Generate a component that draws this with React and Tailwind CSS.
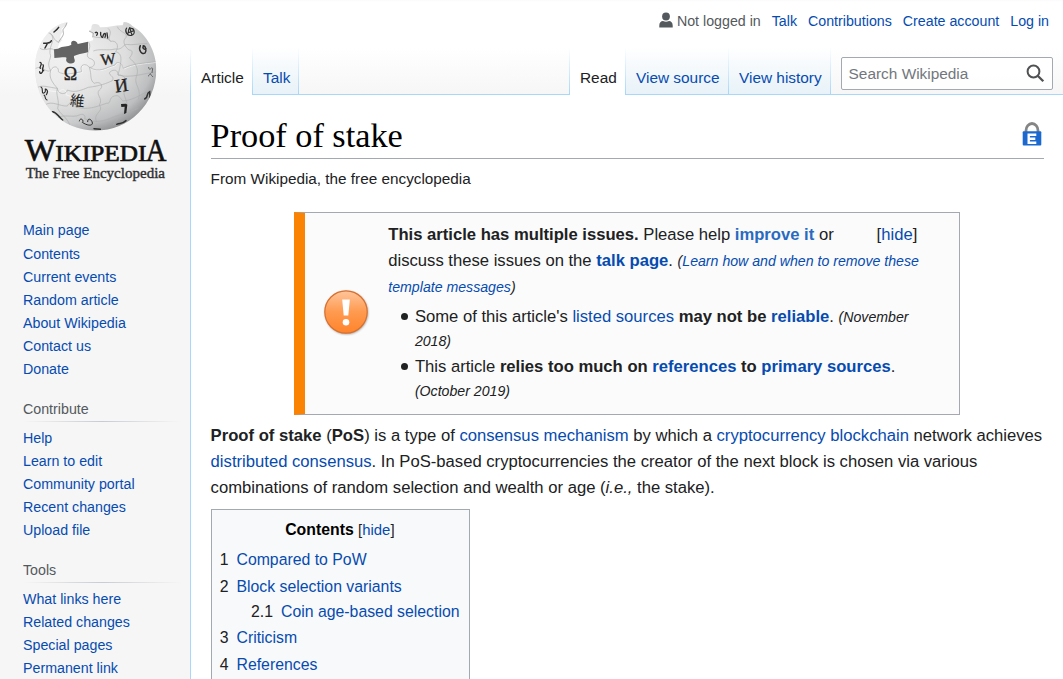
import React from "react";

const link = "text-[#064bb0]";

function A({ children, className = "" }) {
  return (
    <a href="#" className={`${link} ${className}`}>
      {children}
    </a>
  );
}

function Logo() {
  return (
    <svg width="150" height="166" viewBox="60 54 450 498" className="block" fontFamily="Liberation Serif, serif">
      <defs>
        <radialGradient id="globe" cx="0.36" cy="0.3" r="0.76">
          <stop offset="0" stopColor="#f0f0f0" />
          <stop offset="0.5" stopColor="#dedede" />
          <stop offset="0.8" stopColor="#bebfc0" />
          <stop offset="1" stopColor="#808183" />
        </radialGradient>
        <linearGradient id="leftlight" x1="0" x2="1" y1="0" y2="0">
          <stop offset="0" stopColor="#fff" stopOpacity="0.5" />
          <stop offset="0.5" stopColor="#fff" stopOpacity="0" />
        </linearGradient>
        <clipPath id="ball">
          <path d="M201 67 C180 70 160 82 145 98 C118 126 104 165 105 208 C107 310 184 392 287 392 C388 392 468 312 469 210 C469 155 441 103 397 78 C390 70 382 66 371 66 L368 76 C348 75 325 83 300 82 C298 73 289 71 279 73 C271 77 279 88 267 93 C272 100 283 98 279 121 L264 125 L263 158 C246 162 232 163 222 168 C220 174 230 184 220 189 C210 193 195 187 199 176 C202 170 190 172 163 174 L162 148 L174 146 C173 136 180 126 187 120 C174 112 184 102 188 96 C179 88 188 82 198 79 Z" />
        </clipPath>
      </defs>
      <g clipPath="url(#ball)">
        <rect x="100" y="60" width="375" height="340" fill="url(#globe)" />
        <rect x="100" y="60" width="375" height="340" fill="url(#leftlight)" />
        <g fill="none" stroke="#fff" strokeWidth="3" transform="translate(2 2)" opacity="0.6">
          <path d="M107 205 C130 195 135 220 152 212 C160 194 178 200 175 215 C200 228 226 220 245 215 C236 190 260 190 268 202 C300 220 315 203 345 195 C350 180 368 190 370 205 C400 190 430 190 468 185" />
          <path d="M118 275 C145 262 166 280 180 270 C186 262 200 270 196 282 C220 294 240 285 250 280" />
        </g>
        <g fill="none" stroke="#aeafb1" strokeWidth="2">
          <path d="M107 205 C130 195 135 220 152 212 C160 194 178 200 175 215 C192 228 218 220 245 215 C236 190 260 190 268 202 C300 220 315 203 345 195 C350 180 368 190 370 205 C400 190 430 190 468 185" />
          <path d="M113 262 C128 254 145 262 172 265 C174 285 200 285 202 270 C225 280 245 270 265 262 C300 258 320 250 337 242 C347 228 320 225 331 215 C340 208 355 208 354 225 C390 236 430 220 468 216" />
          <path d="M135 315 C155 300 180 320 202 318 C210 302 228 306 226 320 C260 332 290 320 319 310 C336 312 324 293 343 288 C360 282 362 300 369 303 C404 300 425 280 455 270" />
          <path d="M170 355 C190 340 218 355 238 345 C248 340 258 345 254 356 C285 372 316 362 338 352 C358 344 380 340 415 325" />
          <path d="M151 100 C170 120 147 135 150 160 C158 177 136 185 152 212 C145 235 160 250 172 265 C166 286 180 300 173 325 C180 343 200 350 210 376" />
          <path d="M265 125 C280 145 250 165 268 175 C292 180 285 204 268 202 C276 225 268 240 283 250 C300 242 314 258 298 270 C285 283 311 295 298 315 C314 335 276 340 290 366" />
          <path d="M324 85 C342 100 318 112 332 124 C350 120 359 138 347 155 C365 160 368 174 354 225 C377 222 387 250 373 270 C367 292 388 302 378 325 C370 350 350 355 340 375" />
          <path d="M352 80 C360 99 384 97 378 112 C365 125 375 140 387 150 C402 150 397 165 388 174 C405 187 419 206 409 230 C400 253 427 268 415 298" />
          <path d="M280 153 C300 145 322 153 345 147 C365 150 366 139 378 133 C397 137 418 130 442 131" />
          <path d="M145 98 C165 105 156 117 174 126 M120 145 C137 156 148 139 162 150 M279 110 C300 115 320 110 332 124" />
        </g>
        <g fill="#242424" textAnchor="middle">
          <text x="211" y="240" fontSize="54" stroke="#242424" strokeWidth="1">Ω</text>
          <text x="325" y="193" fontSize="48" stroke="#242424" strokeWidth="1" transform="rotate(-7 325 180)">W</text>
          <text x="364" y="275" fontSize="56" stroke="#242424" strokeWidth="1" transform="rotate(-8 364 257)">И</text>
          <text x="232" y="318" fontSize="44" fontFamily="Noto Sans CJK JP, sans-serif" transform="rotate(6 232 302)">維</text>
        </g>
        <path d="M363 312 L364 321 L374 320 L372 342 L379 339 L382 314 L378 311 Z" fill="#242424" />
        <g fill="none" stroke="#303030" strokeWidth="4.500" strokeLinecap="round">
          <path d="M286 98 C292 94 295 101 290 106 M302 97 C300 109 309 118 309 108 C313 95 319 99 315 112 M321 99 L323 114" strokeWidth="4" />
          <path d="M380 84 C373 93 381 109 394 106 C407 103 404 86 394 85 C386 81 384 93 386 99 M383 99 L402 92 M389 83 L396 105" strokeWidth="3.500" />
          <path d="M421 137 C414 150 426 166 435 159 C441 151 436 137 430 137 C426 146 434 150 438 146" />
          <path d="M176 82 C172 88 168 91 162 96" />
          <path d="M131 130 C140 130 152 128 154 122 M143 129 L135 144" />
          <path d="M120 187 C130 190 117 201 121 205 M129 194 C135 199 121 207 131 212 M119 215 C119 224 130 219 128 209" strokeWidth="4" />
          <path d="M123 261 C132 265 122 281 132 279 C142 274 131 264 139 268 C147 275 141 279 139 284 M132 285 C138 286 132 297 141 300" strokeWidth="3.500" />
          <path d="M157 335 C171 336 173 349 188 360" />
          <path d="M238 363 C240 350 254 361 247 367 C266 380 282 377 276 365 C273 356 262 354 263 365" strokeWidth="3" />
          <path d="M282 386 L301 388 M350 373 C362 368 363 375 378 362 M434 297 C448 289 436 282 449 275 L450 293" />
          <path d="M446 202 C448 218 455 197 458 206 L456 218 M445 228 C458 218 444 217 458 230" stroke="#626262" strokeWidth="3" />
        </g>
      </g>
      <path d="M162 148 L174 146 C190 136 202 141 214 134 C209 117 232 120 233 132 L264 125 L264 157 C246 162 232 163 222 168 C220 174 230 184 220 189 C210 193 195 187 199 176 C202 170 190 172 163 174 Z" fill="#646464" />
      <path d="M201 68 C194 90 186 83 190 97 C193 106 181 116 175 128 M267 93 L280 99 L278 112" fill="none" stroke="#8b8b8b" strokeWidth="2" />
      <g fill="#101010" stroke="#101010">
        <text x="74" y="482" fontSize="92" textLength="93" lengthAdjust="spacingAndGlyphs" strokeWidth="1.800">W</text>
        <text x="166" y="482" fontSize="70" textLength="273" lengthAdjust="spacingAndGlyphs" strokeWidth="2">IKIPEDI</text>
        <text x="437" y="482" fontSize="92" textLength="62" lengthAdjust="spacingAndGlyphs" strokeWidth="1.800">A</text>
      </g>
      <text x="77" y="533" fontSize="44" textLength="418" lengthAdjust="spacingAndGlyphs" fill="#303030" stroke="#303030" strokeWidth="1.200">The Free Encyclopedia</text>
    </svg>
  );
}

function Portal({ title, items }) {
  return (
    <nav className="mb-4">
      <h3 className="h-6 leading-6 text-[#54595d]">{title}</h3>
      <div className="mb-[5px] h-px bg-linear-to-r from-transparent via-[#c8ccd1] to-transparent" />
      <ul>
        {items.map((t) => (
          <li key={t} className="h-[23px] leading-[23px]"><A>{t}</A></li>
        ))}
      </ul>
    </nav>
  );
}

function Sidebar() {
  return (
    <aside className="h-[679px] w-[190px] shrink-0 overflow-hidden text-[14.24px]">
      <div className="pt-[18px] pl-5"><Logo /></div>
      <div className="mt-[34px] pr-[9px] pl-[23px]">
        <ul className="mb-4">
          <li className="h-[25px] leading-6"><A>Main page</A></li>
          {["Contents", "Current events", "Random article", "About Wikipedia", "Contact us", "Donate"].map((t) => (
            <li key={t} className="h-[23px] leading-[23px]"><A>{t}</A></li>
          ))}
        </ul>
        <Portal title="Contribute" items={["Help", "Learn to edit", "Community portal", "Recent changes", "Upload file"]} />
        <Portal title="Tools" items={["What links here", "Related changes", "Special pages", "Permanent link"]} />
      </div>
    </aside>
  );
}

function Line() {
  return <div className="w-px shrink-0 bg-linear-to-b from-white to-[#a7d7f9]" />;
}

function Tab({ children, active, className }) {
  return active ? (
    <div className={`-mb-px bg-white pt-[19px] pl-2.5 leading-6 text-[#202122] ${className}`}>{children}</div>
  ) : (
    <div className={`bg-linear-to-b from-white to-[#e8f2f8] pt-[19px] pl-2.5 leading-6 ${className}`}><A>{children}</A></div>
  );
}

function Header() {
  return (
    <header className="flex h-[95px] flex-col">
      <div className="flex h-[47px] justify-end pt-[9px] pr-[14px] text-[14.22px] leading-6">
        <svg width="14" height="16" viewBox="0 0 14 16" className="mt-[3px] mr-[4px]" fill="#54595d">
          <circle cx="7" cy="4.500" r="3.900" />
          <path d="M.3 15.500v-2C.3 10.500 2 9 4 9c2 1 4 1 6 0 2 0 3.700 1.500 3.700 4.500v2z" />
        </svg>
        <span className="mr-[11px] text-[#54595d]">Not logged in</span>
        <div className="flex gap-[11px]">
          <A>Talk</A><A>Contributions</A><A>Create account</A><A>Log in</A>
        </div>
      </div>
      <div className="flex h-12 border-b border-[#a7d7f9] text-[15.4px] whitespace-nowrap">
        <Line />
        <Tab active className="w-[61px]">Article</Tab>
        <Line />
        <Tab className="w-[45px]">Talk</Tab>
        <Line />
        <div className="flex-1" />
        <Line />
        <Tab active className="w-[55px]">Read</Tab>
        <Line />
        <Tab className="w-[102px]">View source</Tab>
        <Line />
        <Tab className="w-[101px]">View history</Tab>
        <Line />
        <div className="mt-[10px] mr-[10px] ml-[10px] flex h-[33px] w-[212px] items-center justify-between rounded-[2px] border border-[#a2a9b1] bg-white/90 pr-[7px] pl-[6.6px] text-[#72777d]">
          <span>Search Wikipedia</span>
          <svg width="19" height="19" viewBox="0 0 19 19" fill="none" stroke="#505153" strokeWidth="2">
            <circle cx="7.500" cy="7.500" r="5.900" />
            <path d="M11.700 11.700L17.300 17.300" strokeWidth="2.300" />
          </svg>
        </div>
      </div>
    </header>
  );
}

function Warning() {
  return (
    <svg width="48" height="48" viewBox="0 0 48 48" className="mb-[3px]">
      <defs>
        <linearGradient id="warn" x1="0" y1="0" x2="0" y2="1">
          <stop offset="0" stopColor="#ffc59b" />
          <stop offset="0.5" stopColor="#ff9a4f" />
          <stop offset="1" stopColor="#ff842b" />
        </linearGradient>
        <filter id="shade" x="-20%" y="-20%" width="140%" height="140%">
          <feGaussianBlur stdDeviation="0.8" />
        </filter>
      </defs>
      <circle cx="24.600" cy="24.800" r="21.500" fill="#777" opacity="0.7" filter="url(#shade)" />
      <circle cx="24" cy="24" r="21.200" fill="url(#warn)" stroke="#d96f2d" strokeWidth="1.200" />
      <path d="M20.200 11.400h7.600l-1.500 16h-4.600z" fill="#fff" />
      <circle cx="24" cy="34.200" r="3.300" fill="#fff" />
    </svg>
  );
}

function Small({ children }) {
  return <i className="text-[14.15px]">{children}</i>;
}

function Issue({ children }) {
  return (
    <li className="flex h-[50px]">
      <span className="mt-2 mr-[6.6px] ml-[13px] size-[7px] shrink-0 rounded-full bg-[#202122]" />
      <div>{children}</div>
    </li>
  );
}

function Notice() {
  return (
    <section className="ml-[83px] flex h-[203px] w-[666px] border border-l-[11px] border-[#a2a9b1] border-l-[#fb8304] bg-[#fbfbfb] text-[16.64px] whitespace-nowrap">
      <div className="flex w-[83.3px] shrink-0 items-center pl-[17px]"><Warning /></div>
      <div className="w-[529px] pt-[9px]">
        <div className="leading-[26px]">
          <div className="flex justify-between">
            <div><b>This article has multiple issues.</b> Please help <A className="font-bold text-[#2a6bc0]!">improve it</A> or</div>
            <div>[<A>hide</A>]</div>
          </div>
          <div className="h-[26px]">discuss these issues on the <A className="font-bold">talk page</A>. <Small>(<A>Learn how and when to remove these</A></Small></div>
          <div className="h-[26px]"><Small><A>template messages</A>)</Small></div>
        </div>
        <ul className="mt-[5px] leading-[24.2px]">
          <Issue>Some of this article's <A>listed sources</A> <b>may not be <A>reliable</A></b>. <Small>(November<br />2018)</Small></Issue>
          <Issue>This article <b>relies too much on <A>references</A> to <A>primary sources</A></b>.<br /><Small>(October 2019)</Small></Issue>
        </ul>
      </div>
    </section>
  );
}

function TocRow({ n, children, className = "" }) {
  return (
    <li className={`flex h-[26px] leading-[26px] ${className}`}>
      <span className="mr-2">{n}</span><A>{children}</A>
    </li>
  );
}

function Toc() {
  return (
    <nav className="mt-2 h-[190px] w-[259px] border border-[#a2a9b1] bg-[#f8f9fa] pt-[7px] pl-[7.7px] text-[15.82px]">
      <div className="mr-[9px] h-[26px] text-center leading-[26px]">
        <b className="text-black">Contents</b> <span className="text-[14.88px]">[<A>hide</A>]</span>
      </div>
      <ul className="mt-1">
        <TocRow n="1">Compared to PoW</TocRow>
        <TocRow n="2" className="mt-px">Block selection variants</TocRow>
        <TocRow n="2.1" className="-mt-px ml-[31.4px]">Coin age-based selection</TocRow>
        <TocRow n="3">Criticism</TocRow>
        <TocRow n="4" className="mt-px">References</TocRow>
      </ul>
    </nav>
  );
}

function Lock() {
  return (
    <svg width="20" height="24" viewBox="0 0 20 24" className="mt-[27px] mr-[2px]">
      <path d="M4 11V8.500a6 7 0 0 1 12 0V11" fill="none" stroke="#858585" strokeWidth="2.800" />
      <rect x="0.700" y="9.300" width="18.600" height="14.200" rx="1" fill="#1b69cf" />
      <path d="M14.300 12.700H6.700v8h7.600M7 16.700h6.300" fill="none" stroke="#fff" strokeWidth="2.400" />
    </svg>
  );
}

export default function App() {
  return (
    <div className="flex h-[679px] w-[1063px] overflow-hidden bg-[linear-gradient(to_bottom,#fafafa_0px,#ffffff_2px,#ffffff_48px,#f6f6f6_95px)] font-['Liberation_Sans',Arial,sans-serif] text-[#202122]">
      <Sidebar />
      <div className="w-[873px]">
        <Header />
        <main className="h-[584px] overflow-hidden border-l border-[#a7d7f9] bg-white pr-[19px] pl-5">
          <div className="flex h-16 justify-between border-b border-[#a2a9b1]">
            <h1 className="-ml-[0.4px] pt-[18px] font-['Liberation_Serif',serif] text-[34.25px] leading-[44px] text-black">Proof of stake</h1>
            <Lock />
          </div>
          <div className="mt-2 mb-[21px] -ml-[0.4px] h-6 text-[15.31px] leading-6">From Wikipedia, the free encyclopedia</div>
          <Notice />
          <p className="mt-2 -ml-[0.4px] text-[16.65px] leading-[26px] whitespace-nowrap">
            <b>Proof of stake</b> (<b>PoS</b>) is a type of <A>consensus mechanism</A> by which a <A>cryptocurrency</A> <A>blockchain</A> network achieves<br />
            <A>distributed consensus</A>. In PoS-based cryptocurrencies the creator of the next block is chosen via various<br />
            combinations of random selection and wealth or age (<i>i.e.,</i> the stake).
          </p>
          <Toc />
        </main>
      </div>
    </div>
  );
}
